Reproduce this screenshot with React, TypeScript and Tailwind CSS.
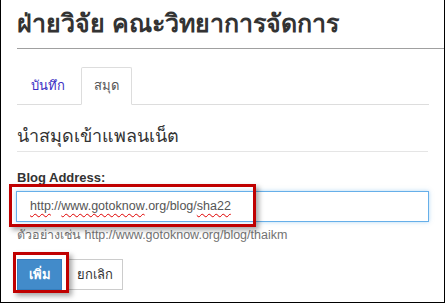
export default function App() {
  const wavy = "underline decoration-wavy decoration-[#e00000] decoration-1 underline-offset-[3px]";

  return (
    <div
      className="relative w-[445px] h-[303px] overflow-hidden bg-white border-x border-b border-black text-[#333]"
      style={{ fontFamily: '"Liberation Sans", Arial, sans-serif' }}
    >
      <div className="pl-4">
        {/* Page title */}
        <h1 className="pt-[8px] pb-[10px] text-[25px] font-bold leading-[30px] border-b border-[#a0a0a0]">
          ฝ่ายวิจัย คณะวิทยาการจัดการ
        </h1>

        {/* Tabs */}
        <div className="mt-[18px] mr-[15px] flex border-b border-[#ddd] text-[13px] leading-[18px]">
          <a className="px-[13px] py-[9px] mr-[2px] text-[#3b2fc4] border border-transparent mb-[-1px]">
            บันทึก
          </a>
          <span className="px-[12px] py-[9px] mb-[-1px] bg-white border border-[#ddd] border-b-white text-[#555] rounded-t-[2px]">
            สมุด
          </span>
        </div>

        <div className="pr-[16px]">
          {/* Section heading */}
          <h2 className="mt-[19px] pb-[3px] text-[18px] leading-[24px] border-b border-[#e5e5e5]">
            นำสมุดเข้าแพลนเน็ต
          </h2>

          {/* Form */}
          <label className="block mt-[18px] text-[13px] font-bold leading-[16px]">Blog Address:</label>
          <div className="mt-[5px] h-[31px] ml-[-1px] w-[413px] border border-[#66afe9] shadow-[0_0_4px_rgba(102,175,233,0.5)] px-[13px] flex items-center text-[12.5px] text-[#555]">
            <span className={wavy}>http</span>
            <span>://</span>
            <span className={wavy}>www.gotoknow</span>
            <span>.org/blog/</span>
            <span className={wavy}>sha22</span>
          </div>
          <p className="mt-[5px] text-[12.5px] leading-[16px] text-[#737373]">
            ตัวอย่างเช่น http://www.gotoknow.org/blog/thaikm
          </p>

          <div className="mt-[16px] flex gap-[5px]">
            <button className="w-[45px] h-[31px] bg-[#428bca] border border-[#357ebd] text-white text-[13px] font-bold">
              เพิ่ม
            </button>
            <button className="w-[56px] h-[31px] bg-white border border-[#ccc] text-[#333] text-[13px]">
              ยกเลิก
            </button>
          </div>
        </div>
      </div>

      {/* Red annotation boxes */}
      <div className="absolute left-[8px] top-[184px] w-[247px] h-[43px] border-[3px] border-[#c00000] shadow-[3px_3px_5px_rgba(0,0,0,0.35)] pointer-events-none" />
      <div className="absolute left-[12px] top-[252px] w-[56px] h-[41px] border-[3px] border-[#c00000] shadow-[3px_3px_5px_rgba(0,0,0,0.35)] pointer-events-none" />
    </div>
  );
}
